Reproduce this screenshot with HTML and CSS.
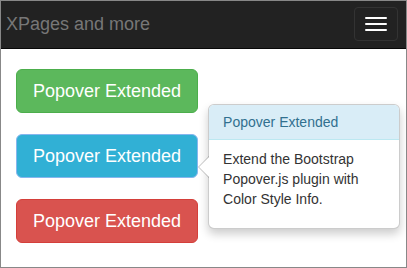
FILE: index.html
```html
<!DOCTYPE html>
<html lang="en">
<head>
	<meta charset="UTF-8">
	<meta name="viewport" content="width=device-width, initial-scale=1.0">
	<title>XPages and more</title>
	<link rel="stylesheet" href="styles.css">
</head>
<body>
	<div class="frame">
		<nav class="navbar">
			<a class="navbar-brand">XPages and more</a>
			<button class="navbar-toggle">
				<span class="icon-bar"></span>
				<span class="icon-bar"></span>
				<span class="icon-bar"></span>
			</button>
		</nav>

		<div class="container">
			<button class="btn btn-success">Popover Extended</button>
			<div class="btn-wrap">
				<button class="btn btn-info">Popover Extended</button>
				<!-- popover opened on the info button -->
				<div class="popover">
					<div class="arrow"></div>
					<h3 class="popover-title">Popover Extended</h3>
					<div class="popover-content">
						<p>Extend the Bootstrap Popover.js plugin with Color Style Info.</p>
					</div>
				</div>
			</div>
			<button class="btn btn-danger">Popover Extended</button>
		</div>
	</div>
</body>
</html>
```

FILE: styles.css
```css
* {
	box-sizing: border-box;
}

body {
	margin: 0;
	font-family: "Liberation Sans", Arial, sans-serif;
	font-size: 14px;
	color: #333;
	background: #fff;
}

.frame {
	height: 268px;
	border: 1px solid #888;
	overflow: hidden;
}

.navbar {
	height: 48px;
	background-color: #222;
	border-bottom: 1px solid #080808;
	display: flex;
	align-items: center;
	justify-content: space-between;
	padding: 0 8px 0 5px;
}

.navbar-brand {
	font-size: 18px;
	color: #777;
	line-height: 20px;
	padding-bottom: 2px;
}

.navbar-toggle {
	width: 44px;
	height: 34px;
	background: transparent;
	border: 1px solid #333;
	border-radius: 4px;
	display: flex;
	flex-direction: column;
	align-items: center;
	justify-content: center;
	gap: 4px;
	padding: 0;
	margin-bottom: 2px;
}

.icon-bar {
	display: block;
	width: 22px;
	height: 2px;
	background-color: #fff;
	border-radius: 1px;
}

.container {
	padding: 20px 15px 0 15px;
	display: flex;
	flex-direction: column;
	align-items: flex-start;
	gap: 21px;
}

.btn-wrap {
	position: relative;
}

.btn {
	font-family: "Liberation Sans", Arial, sans-serif;
	font-size: 18px;
	line-height: 22px;
	padding: 10px 16px;
	border-radius: 6px;
	border: 1px solid transparent;
	color: #fff;
	display: block;
}

.btn-success {
	background-color: #5cb85c;
	border-color: #4cae4c;
}

.btn-info {
	background-color: #31b0d5;
	border-color: #86b6ee;
}

.btn-danger {
	background-color: #d9534f;
	border-color: #d43f3a;
}

.popover {
	position: absolute;
	top: -30px;
	left: calc(100% + 10px);
	width: 192px;
	background: #fff;
	border: 1px solid rgba(0, 0, 0, .2);
	border-radius: 6px;
	box-shadow: 0 5px 10px rgba(0, 0, 0, .2);
}

.popover-title {
	margin: 0;
	padding: 8px 14px;
	font-size: 14px;
	font-weight: normal;
	line-height: 18px;
	background-color: #d9edf7;
	color: #31708f;
	border-bottom: 1px solid #bce8f1;
	border-radius: 5px 5px 0 0;
}

.popover-content {
	padding: 9px 14px;
}

.popover-content p {
	margin: 0 0 10px;
	line-height: 20px;
}

.arrow,
.arrow:after {
	position: absolute;
	width: 0;
	height: 0;
	border-style: solid;
}

.arrow {
	top: 50%;
	left: -11px;
	margin-top: -11px;
	border-width: 11px 11px 11px 0;
	border-color: transparent rgba(0, 0, 0, .25) transparent transparent;
}

.arrow:after {
	content: "";
	left: 1px;
	top: -10px;
	border-width: 10px 10px 10px 0;
	border-color: transparent #fff transparent transparent;
}
```
